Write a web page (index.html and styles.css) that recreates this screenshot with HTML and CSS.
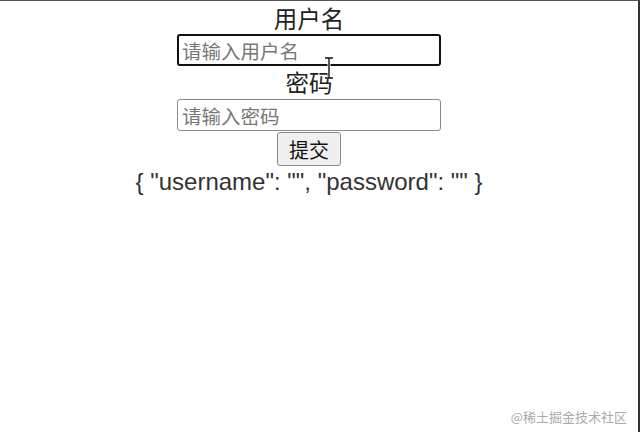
FILE: index.html
```html
<!DOCTYPE html>
<html lang="zh">
<head>
    <meta charset="UTF-8">
    <title>登录</title>
    <link rel="stylesheet" href="styles.css">
</head>
<body>
    <div class="frame">
        <div class="form">
            <label class="field-label" for="username">用户名</label>
            <input class="field focused" type="text" id="username" placeholder="请输入用户名">
            <label class="field-label second" for="password">密码</label>
            <input class="field" type="password" id="password" placeholder="请输入密码">
            <button class="submit">提交</button>
            <div class="result">{ "username": "", "password": "" }</div>
        </div>

        <!-- mouse cursor over the first input -->
        <svg class="cursor" width="12" height="22" viewBox="0 0 12 22">
            <path d="M2 1h8M6 1v20M2 21h8" stroke="#fff" stroke-width="3" fill="none"/>
            <path d="M2 1h8M6 1v20M2 21h8" stroke="#111" stroke-width="1.4" fill="none"/>
        </svg>

        <div class="watermark">@稀土掘金技术社区</div>
    </div>
</body>
</html>
```

FILE: styles.css
```css
body {
    margin: 0;
    padding: 0;
    background: #fff;
    font-family: "Liberation Sans", "Noto Sans CJK SC", sans-serif;
    color: #222;
}

.frame {
    position: relative;
    width: 638px;
    height: 431px;
    border-top: 1px solid #555;
    border-right: 2px solid #333;
    overflow: hidden;
}

.form {
    width: 618px;
    padding-top: 1px;
    display: flex;
    flex-direction: column;
    align-items: center;
}

.field-label {
    font-family: "Noto Sans CJK SC", sans-serif;
    font-size: 23.5px;
    line-height: 32px;
    height: 32px;
    color: #222;
}

.field-label.second {
    height: 33px;
    line-height: 33px;
}

.field {
    box-sizing: border-box;
    width: 264px;
    height: 32px;
    margin: 0;
    padding: 0 4px;
    font-family: "Noto Sans CJK SC", sans-serif;
    font-size: 19.5px;
    border: 1px solid #8a8a8a;
    border-radius: 3px;
    background: #fff;
}

.field::placeholder {
    color: #777;
}

.field.focused {
    border: 2px solid #111;
    padding: 0 3px;
    outline: none;
}

.submit {
    box-sizing: border-box;
    margin-top: 1px;
    width: 64px;
    height: 34px;
    padding: 0;
    font-family: "Noto Sans CJK SC", sans-serif;
    font-size: 20px;
    color: #111;
    background: #efefef;
    border: 1px solid #8a8a8a;
    border-radius: 3px;
}

.result {
    font-size: 24px;
    line-height: 32px;
    color: #333;
}

.cursor {
    position: absolute;
    left: 323px;
    top: 56px;
}

.watermark {
    position: absolute;
    right: 11px;
    bottom: 6px;
    font-family: "Noto Sans CJK SC", sans-serif;
    font-size: 13px;
    color: #aaa;
}
```
